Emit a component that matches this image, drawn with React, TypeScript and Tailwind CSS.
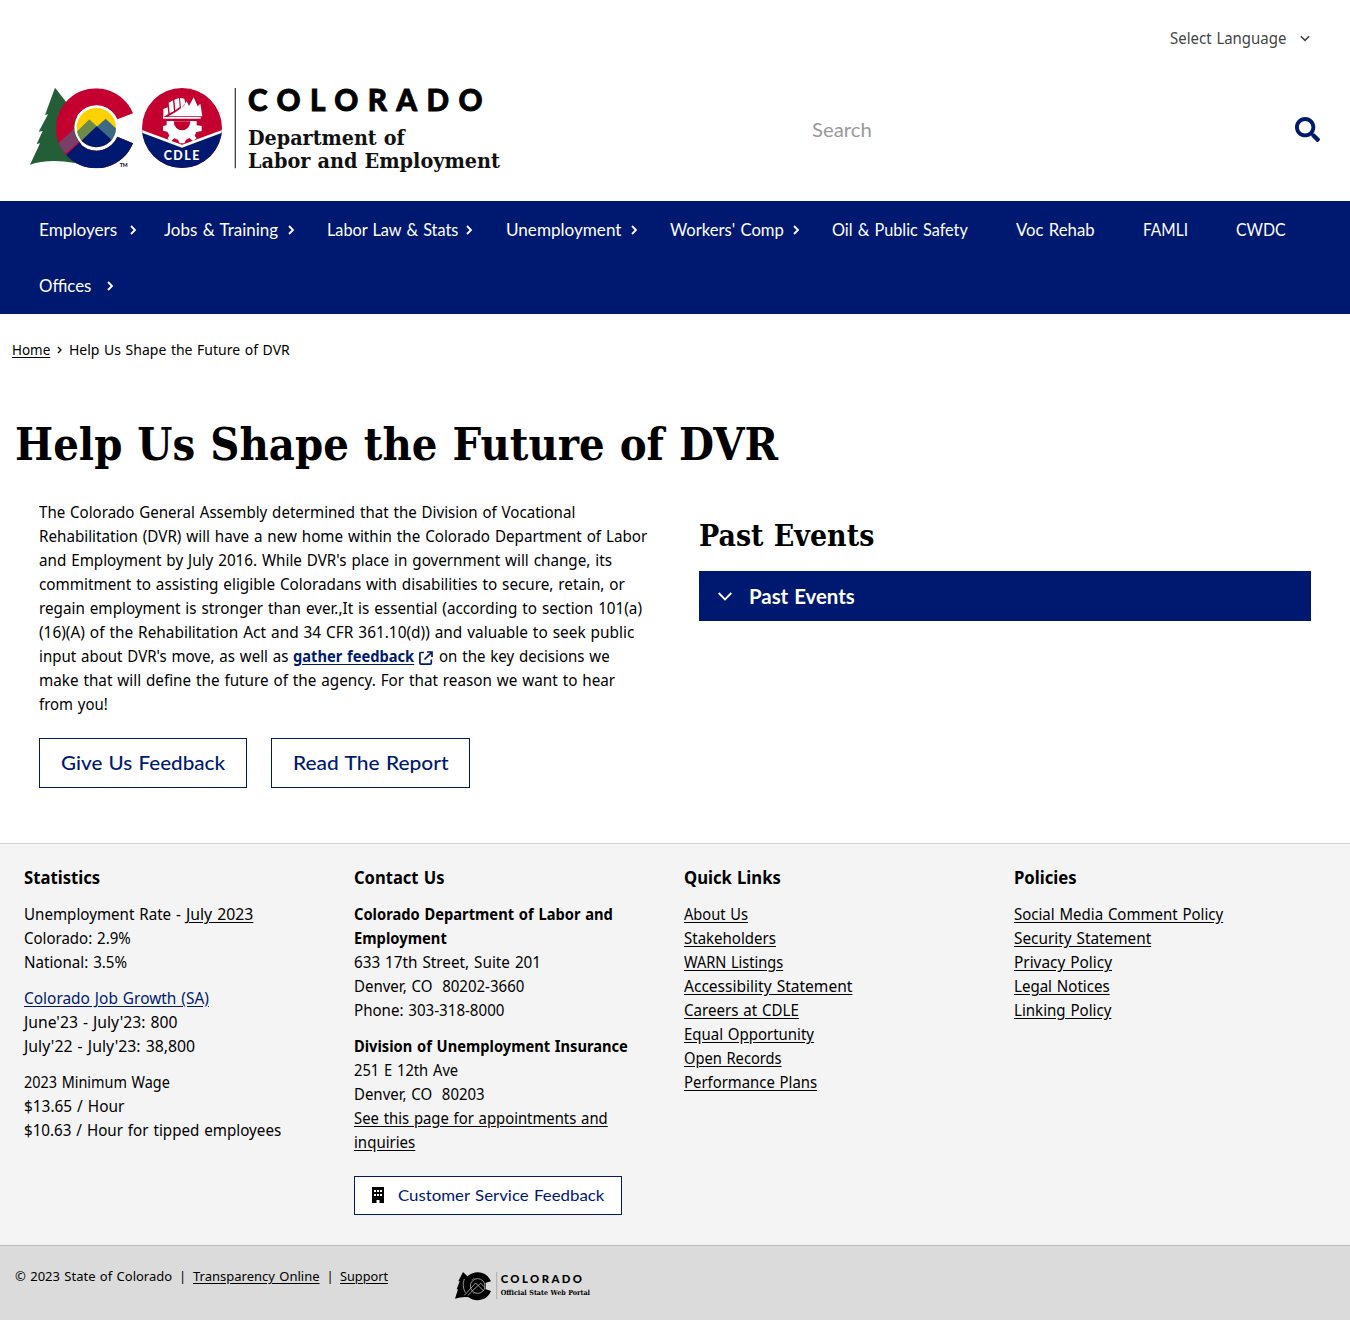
import { useLayoutEffect, useRef, useState, type ReactNode } from 'react';
import { FaSearch } from 'react-icons/fa';

/* Text condensed or widened to fill the width given by its class. */
function Fit({ w, className = '', children }: { w: string; className?: string; children: ReactNode }) {
  const outer = useRef<HTMLSpanElement>(null);
  const inner = useRef<HTMLSpanElement>(null);
  const [scale, setScale] = useState(1);
  useLayoutEffect(() => {
    if (outer.current && inner.current) setScale(outer.current.offsetWidth / inner.current.offsetWidth);
  }, []);
  return (
    <span ref={outer} className={`inline-block whitespace-nowrap align-top ${w}`}>
      <span ref={inner} className={`inline-block origin-left whitespace-pre ${className}`} style={{ transform: `scaleX(${scale})` }}>
        {children}
      </span>
    </span>
  );
}

const sans = 'font-["Noto_Sans",sans-serif]';
const lato = 'font-["Lato",sans-serif]';
const serif = 'font-["DejaVu_Serif",serif]';
const link = 'underline underline-offset-2';

function Chevron({ className = '' }: { className?: string }) {
  return (
    <svg viewBox="0 0 7 10" className={`h-[10px] w-[7px] shrink-0 ${className}`} fill="none" stroke="currentColor" strokeWidth="1.8">
      <path d="M1 1l4 4-4 4" />
    </svg>
  );
}

const nav: { label: string; item: string; w: string; chev?: string }[] = [
  { label: 'Employers', item: 'w-[125px]', w: 'w-[78px]', chev: 'ml-[13px]' },
  { label: 'Jobs & Training', item: 'w-[163px]', w: 'w-[114px]', chev: 'ml-[10px]' },
  { label: 'Labor Law & Stats', item: 'w-[179px]', w: 'w-[131px]', chev: 'ml-[8px]' },
  { label: 'Unemployment', item: 'w-[164px]', w: 'w-[115px]', chev: 'ml-[10px]' },
  { label: "Workers' Comp", item: 'w-[162px]', w: 'w-[114px]', chev: 'ml-[9px]' },
  { label: 'Oil & Public Safety', item: 'w-[184px]', w: 'w-[136px]' },
  { label: 'Voc Rehab', item: 'w-[127px]', w: 'w-[79px]' },
  { label: 'FAMLI', item: 'w-[93px]', w: 'w-[45px]' },
  { label: 'CWDC', item: 'w-[74px]', w: 'w-[50px]' },
  { label: 'Offices', item: 'w-[125px]', w: 'w-[52px]', chev: 'ml-[16px]' },
];

const quick = [
  ['About Us', 'w-[64px]'],
  ['Stakeholders', 'w-[92px]'],
  ['WARN Listings', 'w-[99px]'],
  ['Accessibility Statement', 'w-[168px]'],
  ['Careers at CDLE', 'w-[115px]'],
  ['Equal Opportunity', 'w-[130px]'],
  ['Open Records', 'w-[98px]'],
  ['Performance Plans', 'w-[133px]'],
];

const policies = [
  ['Social Media Comment Policy', 'w-[209px]'],
  ['Security Statement', 'w-[137px]'],
  ['Privacy Policy', 'w-[98px]'],
  ['Legal Notices', 'w-[96px]'],
  ['Linking Policy', 'w-[97px]'],
];

function Logo() {
  return (
    <svg viewBox="0 0 1530 315" className="h-[105px] w-[510px] overflow-visible">
      <defs>
        <clipPath id="c-shape">
          <path d="M339 115A120 120 0 1 0 339 205L292 185A68 68 0 1 1 292 133Z" />
        </clipPath>
        <clipPath id="c-core"><circle cx="229" cy="158" r="59" /></clipPath>
        <clipPath id="badge"><circle cx="486" cy="159" r="120" /></clipPath>
      </defs>
      <path fill="#235e39" d="M105 38L75 120L84 118L56 170L68 168L50 207L60 205L30 269Q85 250 165 264L200 160Z" />
      <g clipPath="url(#c-shape)">
        <rect x="100" y="30" width="250" height="260" fill="#c3002f" />
        <path fill="#001970" d="M95 280L230 155L360 170V290Z" />
        <path fill="#7a3f69" d="M104 215L175 150L200 180L138 235Z" />
      </g>
      <circle cx="229" cy="158" r="66" fill="#fff" />
      <g clipPath="url(#c-core)">
        <rect x="165" y="95" width="130" height="130" fill="#ffd100" />
        <path fill="#6d8a4a" d="M150 190L208 133L232 155L190 230Z" />
        <path fill="#3c6a85" d="M229 157L257 131L300 172V220Z" />
        <path fill="#001970" d="M165 216L230 154L300 218V230H165Z" />
      </g>
      <text x="299" y="276" textLength="24" lengthAdjust="spacingAndGlyphs" fontFamily="Lato" fontWeight="900" fontSize="17" fill="#111">TM</text>

      <g clipPath="url(#badge)">
        <rect x="360" y="35" width="250" height="250" fill="#c3002f" />
        <path fill="#001970" d="M360 167L486 214L612 167V290H360Z" />
        <path fill="none" stroke="#fff" strokeWidth="8" d="M360 167L486 214L612 167" />
      </g>
      <g fill="#fff">
        <path d="M430 102l13-5 2 20-15 10zM446 83l13-7 3 32-13 7zM463 74l14-5 2 27-13 10zM480 69l13 2 3 14-13 16zM466 112l25-18 9-15 7 14 14-26 12 27 8-8 6 38H445z" />
        <path d="M429 126H542V131H429z" />
        <path d="M440 138H530V151L545 153V168L529 171L524 182L530 190L519 198L508 189L498 194L493 205H479L474 194L463 190L451 200L443 191L448 181L442 170L429 167V153L440 151Z" />
      </g>
      <path fill="#c3002f" d="M461 139A25 27 0 0 0 511 139Z" />
      <text x="431" y="256" textLength="107" lengthAdjust="spacing" fontFamily="Lato" fontWeight="900" fontSize="37" fill="#fff">CDLE</text>

      <path d="M646 39V280" stroke="#444" strokeWidth="4" />
      <text x="684" y="107" textLength="704" lengthAdjust="spacing" fontFamily="Lato" fontWeight="900" fontSize="89" fill="#000" stroke="#000" strokeWidth="2.5">COLORADO</text>
      <text x="684" y="209" textLength="470" lengthAdjust="spacingAndGlyphs" fontFamily="DejaVu Serif" fontWeight="700" fontSize="59" fill="#111">Department of</text>
      <text x="684" y="280" textLength="756" lengthAdjust="spacingAndGlyphs" fontFamily="DejaVu Serif" fontWeight="700" fontSize="59" fill="#111">Labor and Employment</text>
    </svg>
  );
}

function PortalLogo() {
  return (
    <svg viewBox="0 0 450 90" className="h-[30px] w-[150px] overflow-visible">
      <path d="M24 3L10 31L14 31L5 55L9 55L0 83Q20 76 47 79L62 40Z" />
      <path d="M108 31A43 42 0 1 0 108 60L88 53A24 24 0 1 1 88 37Z" />
      <circle cx="68" cy="45" r="25" />
      <g fill="none" stroke="#dbdbdb" strokeWidth="2">
        <circle cx="68" cy="45" r="22" />
        <path d="M28 73L62 36L86 60M49 62L77 37L89 48M28 24Q20 44 31 65M38 74L49 63" />
      </g>
      <path d="M125 3V84" stroke="#999" strokeWidth="2" />
      <text x="137" y="37" textLength="244" fontFamily="Lato" fontWeight="900" fontSize="34">COLORADO</text>
      <text x="137" y="71" textLength="268" lengthAdjust="spacingAndGlyphs" fontFamily="DejaVu Serif" fontWeight="700" fontSize="21">Official State Web Portal</text>
    </svg>
  );
}

function BuildingIcon() {
  return (
    <svg viewBox="0 0 12 16" className="h-4 w-3">
      <path fillRule="evenodd" d="M0 0H12V16H7.5V13H4.5V16H0ZM2 3V5H4V3ZM5 3V5H7V3ZM8 3V5H10V3ZM2 7V9H4V7ZM5 7V9H7V7ZM8 7V9H10V7Z" />
    </svg>
  );
}

export default function App() {
  return (
    <div className={`flex h-[1320px] w-[1350px] flex-col overflow-hidden bg-white text-[16px] leading-6 text-black [word-spacing:1px] ${sans}`}>
      <header className="h-[201px] shrink-0">
        <div className="flex h-[75px] items-start justify-end pr-10 pt-[26px] text-[#444]">
          <Fit w="w-[116px]">Select Language</Fit>
          <svg viewBox="0 0 10 7" className="ml-[14px] mt-[9px] h-[7px] w-[10px]" fill="none" stroke="#444" strokeWidth="1.6"><path d="M.8 1.2L5 5.4 9.2 1.2" /></svg>
        </div>
        <div className="flex items-center pl-5 pr-[30px]">
          <Logo />
          <div className={`ml-[282px] mt-0.5 text-[20px] text-[#999] ${lato}`}><Fit w="w-[60px]">Search</Fit></div>
          <FaSearch className="ml-auto mt-1 size-[25px] text-[#001970]" />
        </div>
      </header>

      <nav className={`flex h-[113px] shrink-0 flex-wrap content-start bg-[#001970] pl-[39px] text-[16.5px] text-white ${lato}`}>
        {nav.map((n) => (
          <a key={n.label} className={`flex h-14 items-center pt-0.5 ${n.item}`}>
            <Fit w={n.w}>{n.label}</Fit>
            {n.chev && <Chevron className={n.chev} />}
          </a>
        ))}
      </nav>

      <div className="flex h-[70px] shrink-0 items-center pl-3 text-[14.5px]">
        <Fit w="w-[38px]" className={link}>Home</Fit>
        <svg viewBox="0 0 5 8" className="ml-[7px] mr-[7px] mt-0.5 h-[8px] w-[5px]" fill="none" stroke="currentColor" strokeWidth="1.3"><path d="M1 1l3 3-3 3" /></svg>
        <Fit w="w-[221px]">Help Us Shape the Future of DVR</Fit>
      </div>

      <main className="h-[459px] shrink-0">
        <h1 className={`pl-[15px] pt-[28px] text-[44.5px] font-bold leading-[64px] ${serif}`}><Fit w="w-[763px]">Help Us Shape the Future of DVR</Fit></h1>
        <div className="flex pl-[39px]">
          <section className="w-[660px] pt-[24px]">
            <p className="flex flex-col items-start">
              <Fit w="w-[536px]">The Colorado General Assembly determined that the Division of Vocational</Fit>
              <Fit w="w-[608px]">Rehabilitation (DVR) will have a new home within the Colorado Department of Labor</Fit>
              <Fit w="w-[573px]">and Employment by July 2016. While DVR's place in government will change, its</Fit>
              <Fit w="w-[586px]">commitment to assisting eligible Coloradans with disabilities to secure, retain, or</Fit>
              <Fit w="w-[603px]">regain employment is stronger than ever.,It is essential (according to section 101(a)</Fit>
              <Fit w="w-[595px]">(16)(A) of the Rehabilitation Act and 34 CFR 361.10(d)) and valuable to seek public</Fit>
              <span className="flex">
                <Fit w="w-[249px]">input about DVR's move, as well as</Fit>
                <span className="ml-[5px] font-bold text-[#001970]"><Fit w="w-[121px]" className={link}>gather feedback</Fit></span>
                <svg viewBox="0 0 14 14" className="ml-[5px] mr-[6px] mt-[7px] size-[14px]" fill="none" stroke="#001970" strokeWidth="1.7">
                  <path d="M5 1.5H2Q.9 1.5 .9 2.6V12Q.9 13.1 2 13.1H11.2Q12.3 13.1 12.3 12V8.5M8 1H13V6M13 1L5.5 8.5" />
                </svg>
                <Fit w="w-[171px]">on the key decisions we</Fit>
              </span>
              <Fit w="w-[576px]">make that will define the future of the agency. For that reason we want to hear</Fit>
              <Fit w="w-[69px]">from you!</Fit>
            </p>
            <div className={`mt-[22px] flex gap-6 text-[20px] font-medium text-[#001970] ${lato}`}>
              <a className="flex h-[50px] w-[208px] items-center justify-center border border-[#001970] pb-0.5"><Fit w="w-[164px]">Give Us Feedback</Fit></a>
              <a className="flex h-[50px] w-[199px] items-center justify-center border border-[#001970] pb-0.5"><Fit w="w-[155px]">Read The Report</Fit></a>
            </div>
          </section>
          <section className="w-[612px] pt-[40px]">
            <h2 className={`text-[30px] font-bold leading-10 ${serif}`}><Fit w="w-[175px]">Past Events</Fit></h2>
            <div className={`mt-[15px] flex h-[50px] items-center bg-[#001970] pl-[19px] text-[20px] font-bold text-white ${lato}`}>
              <svg viewBox="0 0 14 9" className="mr-[17px] h-[9px] w-[14px]" fill="none" stroke="currentColor" strokeWidth="1.8"><path d="M.7 1L7 7.4 13.3 1" /></svg>
              <Fit w="w-[106px]">Past Events</Fit>
            </div>
          </section>
        </div>
      </main>

      <footer className="flex grow flex-col">
        <div className="flex h-[402px] border-t border-[#d0d0d0] bg-[#f4f4f4] pl-6 pt-[21px]">
          <div className="w-[330px]">
            <h3 className="text-[18px] font-bold"><Fit w="w-[76px]">Statistics</Fit></h3>
            <div className="mt-[13px] flex flex-col items-start">
              <span className="flex">
                <Fit w="w-[157px]">Unemployment Rate -</Fit>
                <span className="ml-[5px]"><Fit w="w-[67px]" className={link}>July 2023</Fit></span>
              </span>
              <Fit w="w-[107px]">Colorado: 2.9%</Fit>
              <Fit w="w-[103px]">National: 3.5%</Fit>
            </div>
            <div className="mt-3 flex flex-col items-start">
              <span className="text-[#001970]"><Fit w="w-[185px]" className={link}>Colorado Job Growth (SA)</Fit></span>
              <Fit w="w-[153px]">June'23 - July'23: 800</Fit>
              <Fit w="w-[171px]">July'22 - July'23: 38,800</Fit>
            </div>
            <div className="mt-3 flex flex-col items-start">
              <Fit w="w-[146px]">2023 Minimum Wage</Fit>
              <Fit w="w-[100px]">$13.65 / Hour</Fit>
              <Fit w="w-[257px]">$10.63 / Hour for tipped employees</Fit>
            </div>
          </div>
          <div className="w-[330px]">
            <h3 className="text-[18px] font-bold"><Fit w="w-[91px]">Contact Us</Fit></h3>
            <div className="mt-[13px] flex flex-col items-start">
              <strong><Fit w="w-[259px]">Colorado Department of Labor and</Fit></strong>
              <strong><Fit w="w-[93px]">Employment</Fit></strong>
              <Fit w="w-[187px]">633 17th Street, Suite 201</Fit>
              <Fit w="w-[170px]">{'Denver, CO  80202-3660'}</Fit>
              <Fit w="w-[150px]">Phone: 303-318-8000</Fit>
            </div>
            <div className="mt-3 flex flex-col items-start">
              <strong><Fit w="w-[274px]">Division of Unemployment Insurance</Fit></strong>
              <Fit w="w-[104px]">251 E 12th Ave</Fit>
              <Fit w="w-[131px]">{'Denver, CO  80203'}</Fit>
              <Fit w="w-[254px]" className={link}>See this page for appointments and</Fit>
              <Fit w="w-[61px]" className={link}>inquiries</Fit>
            </div>
            <a className="mt-[22px] flex h-[39px] w-[268px] items-center border border-[#001970] bg-white pb-px pl-[17px]">
              <BuildingIcon />
              <span className={`ml-[14px] text-[#001970] ${lato}`}><Fit w="w-[206px]">Customer Service Feedback</Fit></span>
            </a>
          </div>
          <div className="w-[330px]">
            <h3 className="text-[18px] font-bold"><Fit w="w-[97px]">Quick Links</Fit></h3>
            <div className="mt-[13px] flex flex-col items-start">
              {quick.map(([t, w]) => <Fit key={t} w={w} className={link}>{t}</Fit>)}
            </div>
          </div>
          <div>
            <h3 className="text-[18px] font-bold"><Fit w="w-[63px]">Policies</Fit></h3>
            <div className="mt-[13px] flex flex-col items-start">
              {policies.map(([t, w]) => <Fit key={t} w={w} className={link}>{t}</Fit>)}
            </div>
          </div>
        </div>
        <div className="flex grow items-start border-t border-[#bdbdbd] bg-[#dbdbdb] pl-[15px] text-[13px]">
          <div className="flex pt-[18px]">
            <Fit w="w-[157px]">© 2023 State of Colorado</Fit>
            <span className="w-[21px] text-center">|</span>
            <Fit w="w-[127px]" className={link}>Transparency Online</Fit>
            <span className="w-5 text-center">|</span>
            <Fit w="w-[48px]" className={link}>Support</Fit>
          </div>
          <div className="ml-[67px] pt-[25px]"><PortalLogo /></div>
        </div>
      </footer>
    </div>
  );
}
